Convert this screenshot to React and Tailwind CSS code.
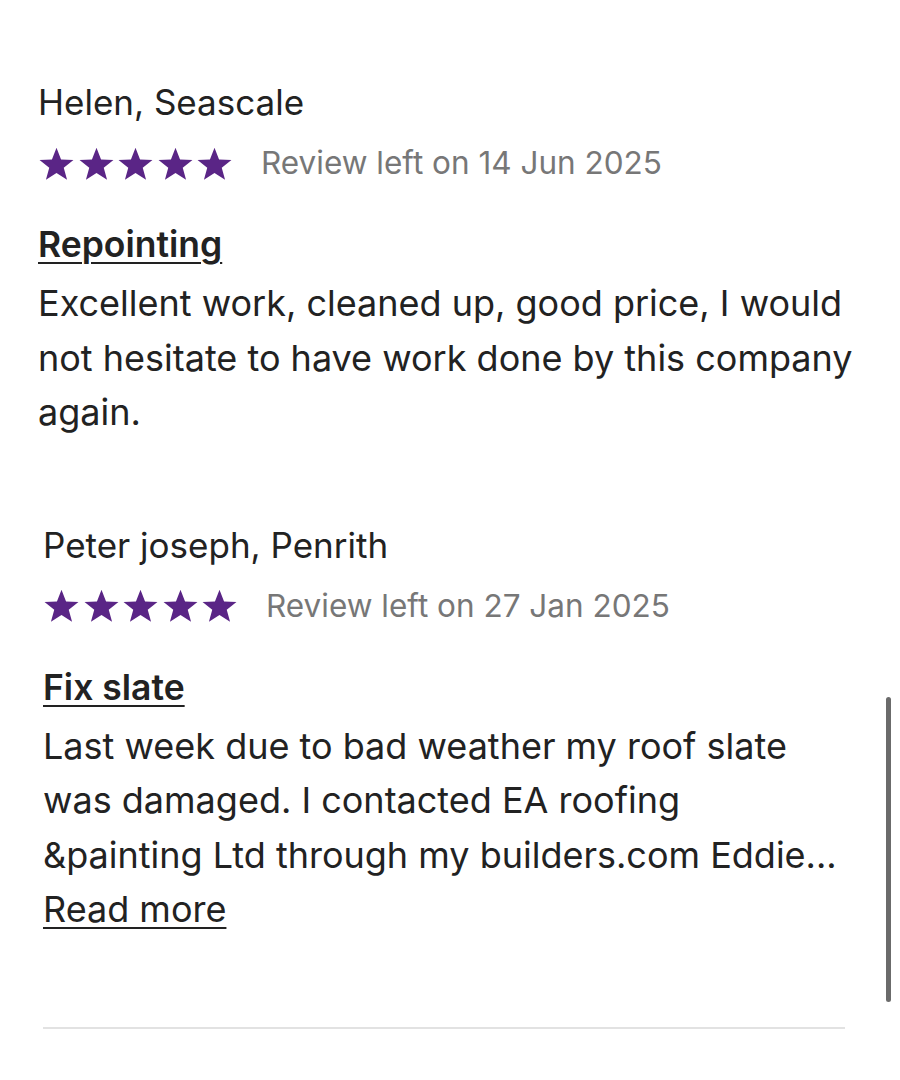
import React from 'react';

const Star = () => (
  <svg width="37" height="37" viewBox="0 0 24 24" className="shrink-0">
    <path
      d="M12 1.8l2.95 7.6 8.05.35-6.3 5.05 2.15 7.8L12 18.1l-6.85 4.5 2.15-7.8L1 9.75l8.05-.35z"
      fill="#5a2586"
    />
  </svg>
);

const Review = ({ name, date, title, lines, readMore, offset }) => (
  <div className={offset}>
    <div className="text-[35px] leading-[40px] text-[#222]">{name}</div>
    <div className="flex items-center mt-[21px]">
      <div className="flex gap-[2.5px]">
        {[0, 1, 2, 3, 4].map((i) => (
          <Star key={i} />
        ))}
      </div>
      <span className="ml-[28px] text-[31.5px] text-[#777] leading-[40px]">{date}</span>
    </div>
    <div className="mt-[42px] text-[35.5px] leading-[40px] font-semibold text-[#222] underline underline-offset-[5px] decoration-[2px]">
      {title}
    </div>
    <div className="mt-[11px] text-[36px] leading-[54.5px] text-[#222]">
      {lines.map((l, i) => (
        <div key={i}>{l}</div>
      ))}
      {readMore && (
        <div className="underline underline-offset-[5px] decoration-[2px]">Read more</div>
      )}
    </div>
  </div>
);

export default function App() {
  return (
    <div
      className="relative w-[900px] h-[1080px] bg-white overflow-hidden"
      style={{ fontFamily: 'Inter, "Noto Sans", sans-serif' }}
    >
      <div className="pt-[82px]">
        <Review
          offset="pl-[38px]"
          name="Helen, Seascale"
          date="Review left on 14 Jun 2025"
          title="Repointing"
          lines={[
            'Excellent work, cleaned up, good price, I would',
            'not hesitate to have work done by this company',
            'again.',
          ]}
        />
        <div className="mt-[85px]">
          <Review
            offset="pl-[43px]"
            name="Peter joseph, Penrith"
            date="Review left on 27 Jan 2025"
            title="Fix slate"
            lines={[
              'Last week due to bad weather my roof slate',
              'was damaged. I contacted EA roofing',
              '&painting Ltd through my builders.com Eddie...',
            ]}
            readMore
          />
        </div>
        <div className="ml-[43px] w-[802px] h-[2px] bg-[#e2e2e2] mt-[90px]" />
      </div>
      <div className="absolute left-[886px] top-[697px] w-[5px] h-[305px] rounded-full bg-[#6b6b6b]" />
    </div>
  );
}
